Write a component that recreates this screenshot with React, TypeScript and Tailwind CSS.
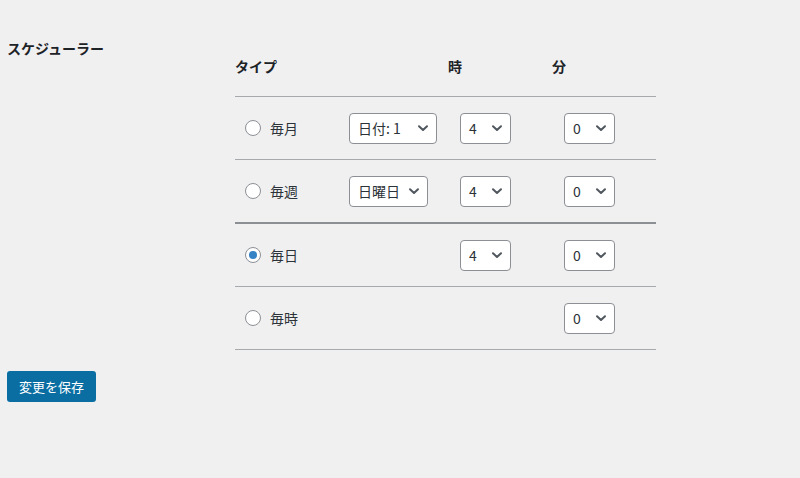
import React from "react";

const font = { fontFamily: '"Noto Sans CJK JP", "Noto Sans", sans-serif' };

function Chevron() {
  return (
    <svg width="12" height="12" viewBox="0 0 12 12" className="shrink-0">
      <path d="M2 4.2 L6 8 L10 4.2" fill="none" stroke="#50575e" strokeWidth="2" strokeLinecap="round" strokeLinejoin="round" />
    </svg>
  );
}

function Select({ value, w }: { value: string; w: string }) {
  return (
    <div className={`${w} h-[31px] bg-white border border-[#8c8f94] rounded-[4px] flex items-center justify-between pl-[8px] pr-[7px] text-[14px] text-[#2c3338]`}>
      <span>{value}</span>
      <Chevron />
    </div>
  );
}

function Radio({ checked }: { checked?: boolean }) {
  return (
    <div className="w-[16px] h-[16px] rounded-full border border-[#8c8f94] bg-white flex items-center justify-center shrink-0">
      {checked && <div className="w-[8px] h-[8px] rounded-full bg-[#3582c4]" />}
    </div>
  );
}

type Row = { label: string; checked?: boolean; first?: string; firstW?: string; hour?: boolean; cls: string };

const rows: Row[] = [
  { label: "毎月", first: "日付: 1", firstW: "w-[88px]", hour: true, cls: "h-[63px] border-b border-[#a7aaad]" },
  { label: "毎週", first: "日曜日", firstW: "w-[79px]", hour: true, cls: "h-[64px] border-b-2 border-[#8c8f94]" },
  { label: "毎日", checked: true, hour: true, cls: "h-[63px] border-b border-[#a7aaad]" },
  { label: "毎時", cls: "h-[63px] border-b border-[#a7aaad]" },
];

export default function App() {
  return (
    <div className="w-full h-[478px] bg-[#f0f0f1] text-[#1d2327] pl-[7px]" style={font}>
      <div className="flex pt-[38px]">
        <div className="w-[228px] text-[14px] font-bold leading-[20px]">スケジューラー</div>
        <div className="w-[421px]">
          <div className="grid grid-cols-[213px_104px_104px] text-[14px] font-bold leading-[20px] pt-[18px] pb-[20px] border-b border-[#a7aaad]">
            <div>タイプ</div>
            <div>時</div>
            <div>分</div>
          </div>
          {rows.map((r) => (
            <div key={r.label} className={`grid grid-cols-[114px_99px_104px_104px] items-center ${r.cls}`}>
              <div className="flex items-center pl-[10px] gap-[9px] text-[14px] text-[#2c3338]">
                <Radio checked={r.checked} />
                <span>{r.label}</span>
              </div>
              <div>{r.first && <Select value={r.first} w={r.firstW!} />}</div>
              <div className="pl-[12px]">{r.hour && <Select value="4" w="w-[51px]" />}</div>
              <div className="pl-[12px]">
                <Select value="0" w="w-[51px]" />
              </div>
            </div>
          ))}
        </div>
      </div>
      <div className="mt-[21px]">
        <button className="w-[89px] h-[31px] bg-[#0a6ea3] text-white text-[13px] rounded-[3px] flex items-center justify-center" style={font}>
          変更を保存
        </button>
      </div>
    </div>
  );
}
